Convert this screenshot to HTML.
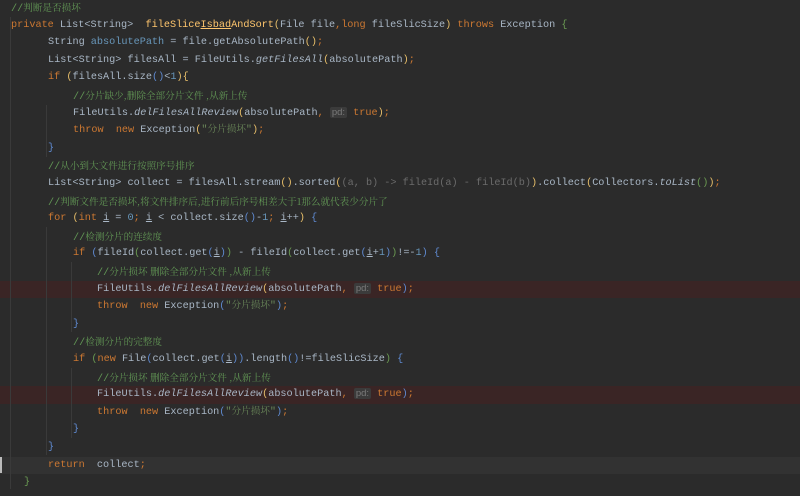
<!DOCTYPE html>
<html><head><meta charset="utf-8"><style>
html,body{margin:0;padding:0;}
body{width:800px;height:496px;background:#2b2b2b;position:relative;overflow:hidden;font-family:"Liberation Mono",monospace;font-size:10.2px;color:#a9b7c6;}
.l{position:absolute;left:0;width:800px;height:17.6px;line-height:17.6px;white-space:pre;}
.t{position:absolute;top:0;}
.t.c{top:2px;}
.red{background:#3a2525;}
.cur{background:#323232;}
.k{color:#cc7832}
.c{color:#629755;font-family:"Liberation Mono","Noto Serif CJK SC",monospace;}
.cj{font-family:"Noto Serif CJK SC",serif;font-size:9.6px;line-height:1;}
.s{color:#6a8759}
.f{color:#ffc66d}
.v{color:#6897bb}
.i{font-style:italic}
.y{color:#e8bf6a}
.b{color:#5f8ad1}
.g{color:#6a9a52}
.gr{color:#6b6b6b}
.u{text-decoration:underline}
.h{background:#3b3b3b;color:#7a7a7a;border-radius:2px;padding:0 2px;font-family:"Liberation Sans",sans-serif;font-size:9.5px;line-height:1;}
.guide{position:absolute;width:1px;background:#3a3a3a;z-index:2;}
.caret{position:absolute;left:0;top:457px;width:2px;height:16px;background:#bbb;z-index:3;}
</style></head><body>
<div class="guide" style="left:10px;top:17px;height:472px"></div>
<div class="guide" style="left:46px;top:105px;height:52px"></div>
<div class="guide" style="left:46px;top:227px;height:228px"></div>
<div class="guide" style="left:71px;top:262px;height:70px"></div>
<div class="guide" style="left:71px;top:368px;height:70px"></div>

<div class="l" style="top:-1px"><span class="t c" style="left:11px">//<span class="cj">判断是否损坏</span></span></div>
<div class="l" style="top:16.6px"><span class="t" style="left:11px"><span class="k">private</span> List&lt;String&gt;  <span class="f">fileSlice<span class="u">Isbad</span>AndSort</span><span class="y">(</span>File file<span class="k">,</span><span class="k">long</span> fileSlicSize<span class="y">)</span> <span class="k">throws</span> Exception <span class="g">{</span></span></div>
<div class="l" style="top:34.2px"><span class="t" style="left:48px">String <span class="v">absolutePath</span> = file.getAbsolutePath<span class="y">()</span><span class="k">;</span></span></div>
<div class="l" style="top:51.8px"><span class="t" style="left:48px">List&lt;String&gt; filesAll = FileUtils.<span class="i">getFilesAll</span><span class="y">(</span>absolutePath<span class="y">)</span><span class="k">;</span></span></div>
<div class="l" style="top:69.4px"><span class="t" style="left:48px"><span class="k">if</span> <span class="y">(</span>filesAll.size<span class="b">()</span>&lt;<span class="v">1</span><span class="y">)</span><span class="y">{</span></span></div>
<div class="l" style="top:87px"><span class="t c" style="left:73px">//<span class="cj">分片缺少,删除全部分片文件 ,从新上传</span></span></div>
<div class="l" style="top:104.6px"><span class="t" style="left:73px">FileUtils.<span class="i">delFilesAllReview</span><span class="y">(</span>absolutePath<span class="k">,</span> <span class="h">pd:</span> <span class="k">true</span><span class="y">)</span><span class="k">;</span></span></div>
<div class="l" style="top:122.2px"><span class="t" style="left:73px"><span class="k">throw</span>  <span class="k">new</span> Exception<span class="y">(</span><span class="s">"<span class="cj">分片损坏</span>"</span><span class="y">)</span><span class="k">;</span></span></div>
<div class="l" style="top:139.8px"><span class="t b" style="left:48px">}</span></div>
<div class="l" style="top:157.4px"><span class="t c" style="left:48px">//<span class="cj">从小到大文件进行按照序号排序</span></span></div>
<div class="l" style="top:175px"><span class="t" style="left:48px">List&lt;String&gt; collect = filesAll.stream<span class="y">()</span>.sorted<span class="y">(</span><span class="gr">(a, b) -&gt; fileId(a) - fileId(b)</span><span class="y">)</span>.collect<span class="y">(</span>Collectors.<span class="i">toList</span><span class="g">()</span><span class="y">)</span><span class="k">;</span></span></div>
<div class="l" style="top:192.6px"><span class="t c" style="left:48px">//<span class="cj">判断文件是否损坏,将文件排序后,进行前后序号相差大于1那么就代表少分片了</span></span></div>
<div class="l" style="top:210.2px"><span class="t" style="left:48px"><span class="k">for</span> <span class="y">(</span><span class="k">int</span> <span class="u">i</span> = <span class="v">0</span><span class="k">;</span> <span class="u">i</span> &lt; collect.size<span class="b">()</span>-<span class="v">1</span><span class="k">;</span> <span class="u">i</span>++<span class="y">)</span> <span class="b">{</span></span></div>
<div class="l" style="top:227.8px"><span class="t c" style="left:73px">//<span class="cj">检测分片的连续度</span></span></div>
<div class="l" style="top:245.4px"><span class="t" style="left:73px"><span class="k">if</span> <span class="b">(</span>fileId<span class="g">(</span>collect.get<span class="b">(</span><span class="u">i</span><span class="b">)</span><span class="g">)</span> - fileId<span class="g">(</span>collect.get<span class="b">(</span><span class="u">i</span>+<span class="v">1</span><span class="b">)</span><span class="g">)</span>!=-<span class="v">1</span><span class="b">)</span> <span class="b">{</span></span></div>
<div class="l" style="top:263px"><span class="t c" style="left:97px">//<span class="cj">分片损坏 删除全部分片文件 ,从新上传</span></span></div>
<div class="l red" style="top:280.6px"><span class="t" style="left:97px">FileUtils.<span class="i">delFilesAllReview</span><span class="y">(</span>absolutePath<span class="k">,</span> <span class="h">pd:</span> <span class="k">true</span><span class="b">)</span><span class="k">;</span></span></div>
<div class="l" style="top:298.2px"><span class="t" style="left:97px"><span class="k">throw</span>  <span class="k">new</span> Exception<span class="b">(</span><span class="s">"<span class="cj">分片损坏</span>"</span><span class="b">)</span><span class="k">;</span></span></div>
<div class="l" style="top:315.8px"><span class="t b" style="left:73px">}</span></div>
<div class="l" style="top:333.4px"><span class="t c" style="left:73px">//<span class="cj">检测分片的完整度</span></span></div>
<div class="l" style="top:351px"><span class="t" style="left:73px"><span class="k">if</span> <span class="g">(</span><span class="k">new</span> File<span class="b">(</span>collect.get<span class="b">(</span><span class="u">i</span><span class="b">))</span>.length<span class="b">()</span>!=fileSlicSize<span class="g">)</span> <span class="b">{</span></span></div>
<div class="l" style="top:368.6px"><span class="t c" style="left:97px">//<span class="cj">分片损坏 删除全部分片文件 ,从新上传</span></span></div>
<div class="l red" style="top:386.2px"><span class="t" style="left:97px">FileUtils.<span class="i">delFilesAllReview</span><span class="y">(</span>absolutePath<span class="k">,</span> <span class="h">pd:</span> <span class="k">true</span><span class="b">)</span><span class="k">;</span></span></div>
<div class="l" style="top:403.8px"><span class="t" style="left:97px"><span class="k">throw</span>  <span class="k">new</span> Exception<span class="b">(</span><span class="s">"<span class="cj">分片损坏</span>"</span><span class="b">)</span><span class="k">;</span></span></div>
<div class="l" style="top:421.4px"><span class="t b" style="left:73px">}</span></div>
<div class="l" style="top:439px"><span class="t b" style="left:48px">}</span></div>
<div class="l cur" style="top:456.6px"><span class="t" style="left:48px"><span class="k">return</span>  collect<span class="k">;</span></span></div>
<div class="l" style="top:474.2px"><span class="t g" style="left:24px">}</span></div>
<div class="caret"></div>
</body></html>
